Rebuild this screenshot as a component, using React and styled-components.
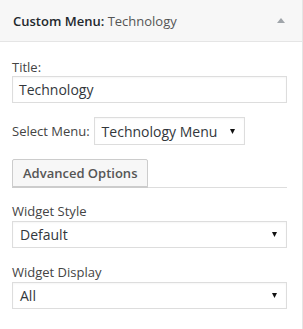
import styled, { createGlobalStyle } from 'styled-components';

const Global = createGlobalStyle`
  body {
    margin: 0;
    background: #fff;
    font-family: 'Open Sans', 'Noto Sans', sans-serif;
  }
`;

const Widget = styled.div`
  width: 303px;
  height: 329px;
  box-sizing: border-box;
  border-right: 1px solid #e5e5e5;
  background: #fff;
`;

const Header = styled.div`
  height: 41px;
  display: flex;
  align-items: center;
  justify-content: space-between;
  padding: 0 17px 0 13px;
  background: #f7f7f7;
  border-bottom: 1px solid #e5e5e5;
  font-size: 13px;
  color: #23282d;

  strong {
    font-weight: 600;
  }

  span {
    color: #555;
  }
`;

const Body = styled.div`
  padding: 16px 15px 0 12px;
  font-size: 13px;
  color: #444;
`;

const Label = styled.div`
  line-height: 18px;
  margin-top: ${(p) => p.$top || 0}px;
  margin-bottom: ${(p) => p.$bottom || 0}px;
`;

const TextBox = styled.div`
  height: 27px;
  box-sizing: border-box;
  border: 1px solid #ddd;
  padding: 0 6px;
  display: flex;
  align-items: center;
  font-size: 14px;
  color: #32373c;
  box-shadow: inset 0 1px 2px rgba(0, 0, 0, 0.04);
`;

const Select = styled.div`
  height: ${(p) => p.$h || 27}px;
  width: ${(p) => (p.$w ? `${p.$w}px` : 'auto')};
  box-sizing: border-box;
  border: 1px solid #ddd;
  padding: 0 9px 0 ${(p) => p.$pl || 7}px;
  display: flex;
  align-items: center;
  justify-content: space-between;
  font-size: 14px;
  color: #32373c;
  box-shadow: inset 0 1px 2px rgba(0, 0, 0, 0.04);
`;

const Row = styled.div`
  display: flex;
  align-items: center;
  gap: 4px;
  margin-top: 14px;
`;

const Section = styled.div`
  margin-top: 14px;
  border-bottom: 1px solid #ddd;
`;

const Button = styled.div`
  display: inline-flex;
  align-items: center;
  height: 28px;
  box-sizing: border-box;
  padding: 0 10px;
  background: #f7f7f7;
  border: 1px solid #ccc;
  border-radius: 2px 2px 0 0;
  box-shadow: 0 1px 0 #ccc;
  font-size: 13px;
  font-weight: 600;
  color: #555;
  vertical-align: bottom;
`;

const Caret = () => (
  <svg width="5" height="5" viewBox="0 0 5 5">
    <polygon points="0,0 5,0 2.5,5" fill="#111" />
  </svg>
);

const Toggle = () => (
  <svg width="8" height="5" viewBox="0 0 8 5">
    <polygon points="0,5 8,5 4,0" fill="#a0a5aa" />
  </svg>
);

export default function App() {
  return (
    <>
      <Global />
      <Widget>
        <Header>
          <div>
            <strong>Custom Menu:</strong> <span>Technology</span>
          </div>
          <Toggle />
        </Header>
        <Body>
          <Label>Title:</Label>
          <TextBox>Technology</TextBox>

          <Row>
            <span>Select Menu:</span>
            <Select $w={151} $h={28}>
              Technology Menu
              <Caret />
            </Select>
          </Row>

          <Section>
            <Button>Advanced Options</Button>
          </Section>

          <Label $top={14} $bottom={1}>Widget Style</Label>
          <Select>
            Default
            <Caret />
          </Select>

          <Label $top={15} $bottom={1}>Widget Display</Label>
          <Select>
            All
            <Caret />
          </Select>
        </Body>
      </Widget>
    </>
  );
}
